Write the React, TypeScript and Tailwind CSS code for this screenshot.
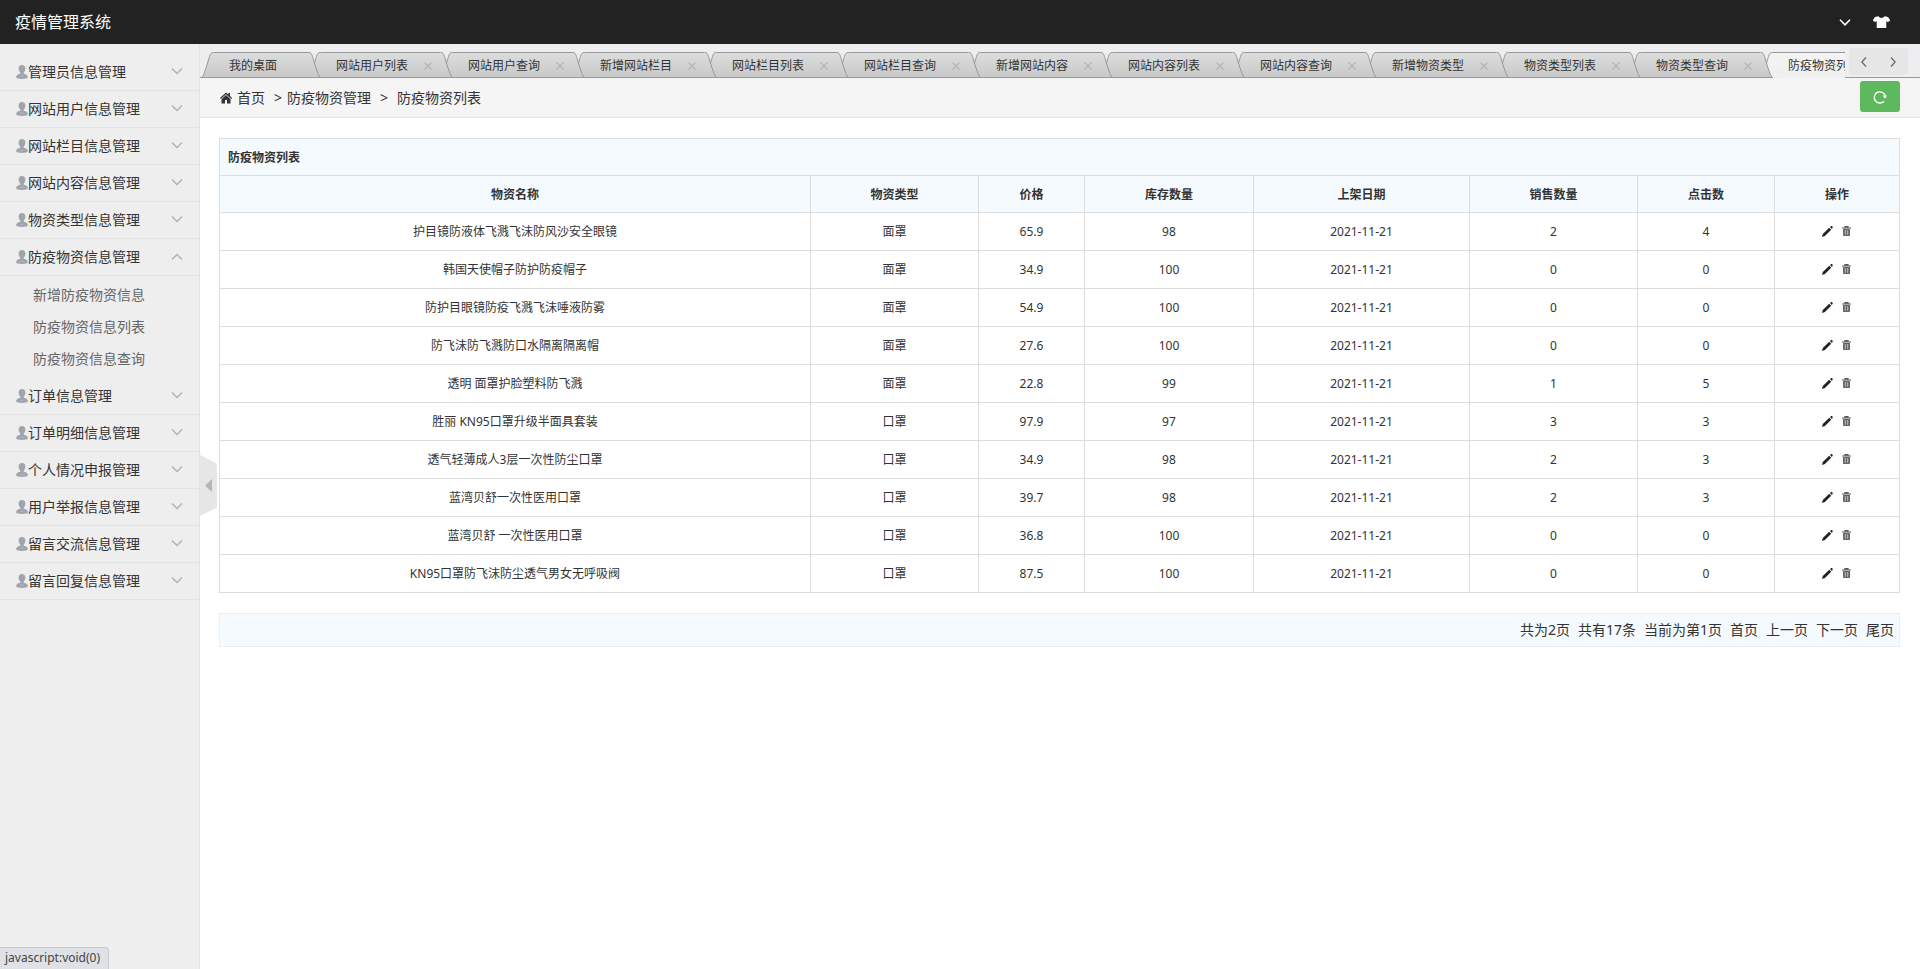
import React from "react";

type MenuGroup = { title: string; children?: string[] };

const MENU: MenuGroup[] = [
  { title: "管理员信息管理" },
  { title: "网站用户信息管理" },
  { title: "网站栏目信息管理" },
  { title: "网站内容信息管理" },
  { title: "物资类型信息管理" },
  {
    title: "防疫物资信息管理",
    children: ["新增防疫物资信息", "防疫物资信息列表", "防疫物资信息查询"],
  },
  { title: "订单信息管理" },
  { title: "订单明细信息管理" },
  { title: "个人情况申报管理" },
  { title: "用户举报信息管理" },
  { title: "留言交流信息管理" },
  { title: "留言回复信息管理" },
];

const TABS = [
  "我的桌面",
  "网站用户列表",
  "网站用户查询",
  "新增网站栏目",
  "网站栏目列表",
  "网站栏目查询",
  "新增网站内容",
  "网站内容列表",
  "网站内容查询",
  "新增物资类型",
  "物资类型列表",
  "物资类型查询",
  "防疫物资列表",
];

const COLUMNS = ["物资名称", "物资类型", "价格", "库存数量", "上架日期", "销售数量", "点击数", "操作"];

const ROWS: string[][] = [
  ["护目镜防液体飞溅飞沫防风沙安全眼镜", "面罩", "65.9", "98", "2021-11-21", "2", "4"],
  ["韩国天使帽子防护防疫帽子", "面罩", "34.9", "100", "2021-11-21", "0", "0"],
  ["防护目眼镜防疫飞溅飞沫唾液防雾", "面罩", "54.9", "100", "2021-11-21", "0", "0"],
  ["防飞沫防飞溅防口水隔离隔离帽", "面罩", "27.6", "100", "2021-11-21", "0", "0"],
  ["透明 面罩护脸塑料防飞溅", "面罩", "22.8", "99", "2021-11-21", "1", "5"],
  ["胜丽 KN95口罩升级半面具套装", "口罩", "97.9", "97", "2021-11-21", "3", "3"],
  ["透气轻薄成人3层一次性防尘口罩", "口罩", "34.9", "98", "2021-11-21", "2", "3"],
  ["蓝湾贝舒一次性医用口罩", "口罩", "39.7", "98", "2021-11-21", "2", "3"],
  ["蓝湾贝舒 一次性医用口罩", "口罩", "36.8", "100", "2021-11-21", "0", "0"],
  ["KN95口罩防飞沫防尘透气男女无呼吸阀", "口罩", "87.5", "100", "2021-11-21", "0", "0"],
];

function UserIcon() {
  return (
    <svg className="h-[14px] w-[12px] shrink-0" viewBox="0 0 12 14" fill="#a0a5ad" aria-hidden="true">
      <path d="M6 0C3.7 0 2.600 1.500 2.600 3.600c0 1.700.7 3.200 1.700 4.100v1C3 9.200.4 9.500.2 11.600 0 13.200.8 13.500 2 13.500c1.200 0 2.500.5 4 .5s2.800-.5 4-.5c1.200 0 2-.3 1.800-1.900C11.600 9.500 9 9.200 7.700 8.700v-1c1-.9 1.700-2.400 1.700-4.100C9.400 1.500 8.300 0 6 0z" />
      <path d="M4.800 10.700 6 12l1.200-1.300" fill="none" stroke="#c6cad0" strokeWidth=".7" />
    </svg>
  );
}

function Chevron({ open = false }: { open?: boolean }) {
  return (
    <svg
      className="h-[12px] w-[12px] shrink-0"
      viewBox="0 0 12 12"
      fill="none"
      stroke="#b0b0b0"
      strokeWidth="1.3"
      aria-hidden="true"
    >
      <path d={open ? "M1 8.500 6 3.500l5 5" : "M1 2.500l5 5 5-5"} />
    </svg>
  );
}

function TabShape({ width, active }: { width: number; active: boolean }) {
  const id = (active ? "tab-active-" : "tab-idle-") + width;
  const outline = `M0.500 26 C3 23 3.500 20 5 16 L8.500 4.500 C9.300 2 10 .5 12.500 .5 H${width - 12.5} C${width - 10} .5 ${
    width - 9.3
  } 2 ${width - 8.5} 4.500 L${width - 5} 16 C${width - 3.5} 20 ${width - 3} 23 ${width - 0.5} 26`;
  return (
    <svg className="absolute inset-0 h-full w-full" viewBox={`0 0 ${width} 26`} aria-hidden="true">
      <defs>
        <linearGradient id={id} x1="0" y1="0" x2="0" y2="1">
          <stop offset="0" stopColor={active ? "#f4f4f4" : "#dcdddd"} />
          <stop offset="1" stopColor={active ? "#efefef" : "#c8c8c9"} />
        </linearGradient>
      </defs>
      <path d={outline + "z"} fill={`url(#${id})`} />
      <path d={outline} fill="none" stroke="#989898" />
      {!active && <path d={`M0 25.500H${width}`} stroke="#989898" />}
    </svg>
  );
}

function Sidebar() {
  return (
    <aside className="w-[200px] shrink-0 border-r border-[#e3e3e3] bg-[#eee] pt-[10px]">
      <nav>
        {MENU.map((group) => (
          <div key={group.title}>
            <button
              type="button"
              className="flex h-[37px] w-full items-center border-b border-[#e2e2e2] pl-4 pr-4 text-left text-[14px] leading-[20px]"
            >
              <UserIcon />
              <span className="grow">{group.title}</span>
              <Chevron open={!!group.children} />
            </button>
            {group.children && (
              <ul className="py-[3px]">
                {group.children.map((child) => (
                  <li key={child}>
                    <a href="#" className="block pl-[33px] text-[14px] leading-[32px] text-[#666]">
                      {child}
                    </a>
                  </li>
                ))}
              </ul>
            )}
          </div>
        ))}
      </nav>
    </aside>
  );
}

function TabBar() {
  return (
    <div className="flex h-[34px] items-end border-b border-[#999] bg-[#eeeef0]">
      <ul className="-mb-px flex h-[26px] min-w-0 grow overflow-hidden pl-px">
        {TABS.map((tab, i) => {
          const first = i === 0;
          const active = i === TABS.length - 1;
          return (
            <li
              key={tab}
              className={
                "relative h-[26px] shrink-0 " + (first ? "w-[120px]" : "-ml-[13px] w-[145px]")
              }
              style={{ zIndex: TABS.length - i }}
            >
              <TabShape width={first ? 120 : 145} active={active} />
              <div className="relative flex h-full items-center pl-7 pt-[2px] text-[12px] leading-[20px]">
                <span className="whitespace-nowrap">{tab}</span>
                {!first && (
                  <button type="button" aria-label={"关闭" + tab} className="ml-4">
                    <svg className="h-[8px] w-[8px]" viewBox="0 0 8 8" stroke="#b0b6bc" strokeWidth="1.200">
                      <path d="M.5.5l7 7M7.500.5l-7 7" />
                    </svg>
                  </button>
                )}
              </div>
            </li>
          );
        })}
      </ul>
      <div className="mb-[2px] ml-1 mr-3 flex h-[27px] w-[59px] shrink-0 items-center justify-around rounded-[4px] bg-[#e6e6e6]">
        <button type="button" aria-label="向左">
          <svg className="h-[10px] w-[6px]" viewBox="0 0 6 10" fill="none" stroke="#666" strokeWidth="1.200">
            <path d="M5 .5.8 5 5 9.500" />
          </svg>
        </button>
        <button type="button" aria-label="向右">
          <svg className="h-[10px] w-[6px]" viewBox="0 0 6 10" fill="none" stroke="#666" strokeWidth="1.200">
            <path d="M1 .5 5.200 5 1 9.500" />
          </svg>
        </button>
      </div>
    </div>
  );
}

function Breadcrumb() {
  return (
    <div className="flex h-[40px] items-center border-b border-[#e5e5e5] bg-[#f5f5f5] pl-5 pr-5 text-[14px] leading-[20px]">
      <svg className="mr-[5px] h-[12px] w-[12px]" viewBox="0 0 12 12" fill="#333" aria-hidden="true">
        <path d="M6 .4 0 6l.8.9L6 2.200l5.200 4.700.8-.9-2-1.900V1H8.400v1.600z" />
        <path d="M6 3.100 1.500 7.200V11.400h3.500V8h2v3.400h3.500V7.200z" />
      </svg>
      <nav className="flex grow items-center">
        <a href="#">首页</a>
        <span className="ml-[9px] mr-[5px]">&gt;</span>
        <span>防疫物资管理</span>
        <span className="mx-[9px]">&gt;</span>
        <span>防疫物资列表</span>
      </nav>
      <button
        type="button"
        aria-label="刷新"
        className="mb-[2px] flex h-[31px] w-[40px] items-center justify-center rounded-[3px] bg-[#5eb95e]"
      >
        <svg className="h-[14px] w-[14px]" viewBox="0 0 14 14" fill="none" stroke="#fff" strokeWidth="1.300" aria-hidden="true">
          <path d="M11 11.200A5.600 5.600 0 1 1 12.400 6.500" />
          <path d="M9.600 5.600h4.400L12 8.800z" fill="#fff" stroke="none" />
        </svg>
      </button>
    </div>
  );
}

function PencilIcon() {
  return (
    <svg className="h-[11px] w-[11px]" viewBox="0 0 11 11" fill="#222" aria-hidden="true">
      <path d="M0 11l.8-2.900L7.300 1.800l1.900 1.900L2.900 10.100zM8 1.100 9 .2c.5-.3 1-.2 1.400.2s.5.9.2 1.400L9.900 2.900z" />
    </svg>
  );
}

function TrashIcon() {
  return (
    <svg className="h-[10px] w-[9px]" viewBox="0 0 9 10" aria-hidden="true">
      <path d="M1 3h7v6.200q0 .8-.8.8H1.800Q1 10 1 9.200z" fill="#666" />
      <path d="M0 2h9M3 1.500V.6h3v.9" fill="none" stroke="#555" strokeWidth="1.200" />
      <path d="M3.300 4v4.800M5.700 4v4.800" stroke="#c9c9c9" strokeWidth=".9" />
    </svg>
  );
}

function GoodsTable() {
  return (
    <table className="w-full table-fixed border-collapse border border-[#ddd] text-center text-[12px] leading-[20px]">
      <colgroup>
        <col />
        <col className="w-[10%]" />
        <col className="w-[106px]" />
        <col className="w-[169px]" />
        <col className="w-[216px]" />
        <col className="w-[10%]" />
        <col className="w-[137px]" />
        <col className="w-[125px]" />
      </colgroup>
      <thead className="bg-[#f5fafe]">
        <tr className="h-[37px]">
          <th colSpan={8} className="border border-[#ddd] px-2 pt-[2px] text-left font-bold">
            防疫物资列表
          </th>
        </tr>
        <tr className="h-[37px]">
          {COLUMNS.map((c) => (
            <th key={c} className="border border-[#ddd] px-2 pt-[2px] font-bold">
              {c}
            </th>
          ))}
        </tr>
      </thead>
      <tbody>
        {ROWS.map((row) => (
          <tr key={row[0]} className="h-[38px]">
            {row.map((cell, i) => (
              <td key={i} className="border border-[#ddd] px-2 pt-px">
                {cell}
              </td>
            ))}
            <td className="border border-[#ddd] px-2 pb-px">
              <div className="flex items-center justify-center gap-[9px]">
                <a href="#" aria-label="编辑">
                  <PencilIcon />
                </a>
                <a href="#" aria-label="删除">
                  <TrashIcon />
                </a>
              </div>
            </td>
          </tr>
        ))}
      </tbody>
    </table>
  );
}

export default function App() {
  return (
    <div className="flex min-h-screen flex-col bg-white font-['Noto_Sans','Noto_Sans_CJK_SC',sans-serif] text-[#333]">
      <header className="flex h-[44px] items-center justify-between bg-[#222] pl-[15px] pr-[30px] text-white">
        <h1 className="text-[16px] leading-[24px]">疫情管理系统</h1>
        <div className="flex items-center gap-[22px]">
          <button type="button" aria-label="展开">
            <svg className="h-[7px] w-[12px]" viewBox="0 0 12 7" fill="none" stroke="#fff" strokeWidth="1.600">
              <path d="M1 .8 6 5.800l5-5" />
            </svg>
          </button>
          <button type="button" aria-label="换肤">
            <svg className="h-[12px] w-[17px]" viewBox="0 0 17 12" fill="#fff">
              <path d="M5.500.3C6.300 1.500 7.300 2 8.500 2s2.200-.5 3-1.700c2 .2 3.500.7 4.300 1.700.6.800 1 1.800 1.200 2.900l-2.700 1.200-1-1.200V12H3.700V4.900l-1 1.200L0 4.900C.2 3.800.6 2.800 1.200 2 2 1 3.500.5 5.500.3z" />
            </svg>
          </button>
        </div>
      </header>
      <div className="relative flex grow">
        <Sidebar />
        <button
          type="button"
          aria-label="收起菜单"
          className="absolute left-[200px] top-[411px] h-[61px] w-[17px]"
        >
          <svg className="h-full w-full" viewBox="0 0 17 61">
            <path d="M0 0 15 7.500Q17 8.500 17 10.500V50.500Q17 52.500 15 53.500L0 61z" fill="#e6e6e6" />
            <path d="M12 24v13L5 30.500z" fill="#b5b5b5" />
          </svg>
        </button>
        <main className="min-w-0 grow">
          <TabBar />
          <Breadcrumb />
          <div className="p-5 pl-[19px]">
            <GoodsTable />
            <div className="mt-5 flex h-[34px] items-center justify-end gap-2 border border-[#eee] bg-[#f5fafe] px-[5px] text-[14px] leading-[20px]">
              <span>共为2页</span>
              <span>共有17条</span>
              <span>当前为第1页</span>
              <a href="#">首页</a>
              <a href="#">上一页</a>
              <a href="#">下一页</a>
              <a href="#">尾页</a>
            </div>
          </div>
        </main>
      </div>
      <div className="fixed bottom-0 left-0 h-[22px] rounded-tr-[4px] border-r border-t border-[#c8cacd] bg-[#dee1e6] pl-[5px] pr-2 text-[12px] leading-[20px] text-[#444]">
        javascript:void(0)
      </div>
    </div>
  );
}
